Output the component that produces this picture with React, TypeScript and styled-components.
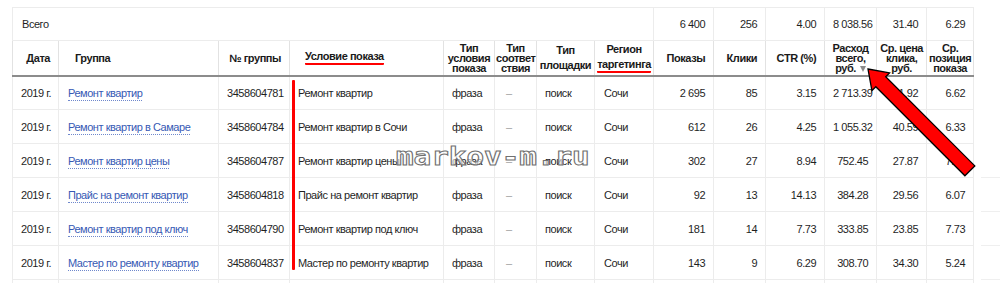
import React from "react";
import styled, { createGlobalStyle } from "styled-components";

const GlobalStyle = createGlobalStyle`
  html, body {
    margin: 0;
    padding: 0;
    background: #fff;
  }
  body {
    font-family: "Liberation Sans", Arial, sans-serif;
    color: #1f1f1f;
  }
`;

const Page = styled.div`
  position: relative;
  width: 1000px;
  height: 283px;
  overflow: hidden;
  display: flex;
  align-items: flex-start;
  padding: 7px 0 0 12px;
  box-sizing: border-box;
`;

const Table = styled.table`
  width: 961px;
  table-layout: fixed;
  border-collapse: collapse;
  border: 1px solid #e4e4e4;
  font-size: 11px;
  letter-spacing: -0.45px;
  flex-shrink: 0;
`;

const TotalRow = styled.tr`
  height: 33px;
`;

const HeadRow = styled.tr`
  height: 35px;
  border-bottom: 2px solid #8c8c8c;
`;

const DataRow = styled.tr`
  height: 34px;
`;

const Cell = styled.td<{ $align?: "left" | "right" | "center"; $pad?: string }>`
  border: 1px solid #ececec;
  padding: ${(p) => p.$pad || "0 8px"};
  text-align: ${(p) => p.$align || "left"};
  vertical-align: middle;
  white-space: nowrap;
  overflow: hidden;
  line-height: 14px;
`;

const HeadCell = styled.th<{ $align?: "left" | "right" | "center"; $pad?: string; $lh?: number }>`
  border: 1px solid #e2e2e2;
  border-bottom: 2px solid #8c8c8c;
  padding: ${(p) => p.$pad || "0 8px"};
  text-align: ${(p) => p.$align || "center"};
  vertical-align: middle;
  font-weight: 700;
  font-size: 11px;
  line-height: ${(p) => p.$lh || 10}px;
  color: #1a1a1a;
  white-space: nowrap;
`;

const Line = styled.span`
  display: block;
`;

const Marked = styled.span`
  display: inline-block;
  padding-bottom: 1px;
  border-bottom: 2.5px solid #f00;
  border-radius: 1px;
  line-height: 12px;
`;

const SortMark = styled.span`
  display: inline-block;
  margin-left: 4px;
  vertical-align: middle;
  width: 0;
  height: 0;
  border-left: 3.5px solid transparent;
  border-right: 3.5px solid transparent;
  border-top: 6px solid #8a8a8a;
`;

const GroupLink = styled.span`
  color: #3659b4;
  border-bottom: 1px dotted #6f88cc;
  padding-bottom: 1px;
`;

const Dash = styled.span`
  color: #a0a0a0;
`;

const SideStrip = styled.div`
  margin-left: 7px;
  width: 20px;
  padding-top: 170px;
  display: flex;
  flex-direction: column;
`;

const SideLine = styled.div`
  height: 33px;
  border-top: 1px solid #efefef;
`;

const Marker = styled.div`
  position: absolute;
  left: 292px;
  top: 80px;
  width: 2.5px;
  height: 190px;
  background: #f00;
  border-radius: 1px;
`;

const Watermark = styled.div`
  position: absolute;
  left: 396px;
  top: 144px;
  font-family: "DejaVu Sans Mono", "Liberation Mono", monospace;
  font-weight: 700;
  font-size: 25px;
  line-height: 25px;
  color: rgba(255, 255, 255, 0.6);
  -webkit-text-stroke: 1px #707070;
  transform: scaleX(1.17);
  transform-origin: left top;
  pointer-events: none;
`;

const Overlay = styled.svg`
  position: absolute;
  left: 0;
  top: 0;
  pointer-events: none;
`;

const cols = [46, 160, 71, 154, 51, 42, 58, 59, 60, 52, 59, 52, 50, 47];

const rows = [
  ["Ремонт квартир", "3458604781", "Ремонт квартир", "2 695", "85", "3.15", "2 713.39", "31.92", "6.62"],
  ["Ремонт квартир в Самаре", "3458604784", "Ремонт квартир в Сочи", "612", "26", "4.25", "1 055.32", "40.59", "6.33"],
  ["Ремонт квартир цены", "3458604787", "Ремонт квартир цены", "302", "27", "8.94", "752.45", "27.87", "7.01"],
  ["Прайс на ремонт квартир", "3458604818", "Прайс на ремонт квартир", "92", "13", "14.13", "384.28", "29.56", "6.07"],
  ["Ремонт квартир под ключ", "3458604790", "Ремонт квартир под ключ", "181", "14", "7.73", "333.85", "23.85", "7.73"],
  ["Мастер по ремонту квартир", "3458604837", "Мастер по ремонту квартир", "143", "9", "6.29", "308.70", "34.30", "5.24"],
];

const totals = ["6 400", "256", "4.00", "8 038.56", "31.40", "6.29"];

const Stack: React.FC<{ lines: string[] }> = ({ lines }) => (
  <>
    {lines.map((l, i) => (
      <Line key={i}>{l}</Line>
    ))}
  </>
);

const App: React.FC = () => {
  return (
    <>
      <GlobalStyle />
      <Page>
        <Table>
          <colgroup>
            {cols.map((w, i) => (
              <col key={i} style={{ width: w }} />
            ))}
          </colgroup>
          <tbody>
            <TotalRow>
              <Cell colSpan={8} $pad="0 9px">
                Всего
              </Cell>
              {totals.map((t, i) => (
                <Cell key={i} $align="right">
                  {t}
                </Cell>
              ))}
            </TotalRow>
            <HeadRow>
              <HeadCell $align="right">Дата</HeadCell>
              <HeadCell $align="left" $pad="0 8px 0 16px">
                Группа
              </HeadCell>
              <HeadCell $align="right">№ группы</HeadCell>
              <HeadCell $align="left" $pad="0 8px 0 15px">
                <Marked>Условие показа</Marked>
              </HeadCell>
              <HeadCell $pad="0 1px">
                <Stack lines={["Тип", "условия", "показа"]} />
              </HeadCell>
              <HeadCell $pad="0 1px">
                <Stack lines={["Тип", "соответ", "ствия"]} />
              </HeadCell>
              <HeadCell $pad="0 1px" $lh={15}>
                <Stack lines={["Тип", "площадки"]} />
              </HeadCell>
              <HeadCell $pad="0 1px" $lh={15}>
                <Line>Регион</Line>
                <Marked>таргетинга</Marked>
              </HeadCell>
              <HeadCell $align="right">Показы</HeadCell>
              <HeadCell $align="right">Клики</HeadCell>
              <HeadCell $align="right">CTR (%)</HeadCell>
              <HeadCell $pad="0 1px">
                <Line>Расход</Line>
                <Line>всего,</Line>
                <Line>
                  руб.
                  <SortMark />
                </Line>
              </HeadCell>
              <HeadCell $pad="0 1px">
                <Stack lines={["Ср. цена", "клика,", "руб."]} />
              </HeadCell>
              <HeadCell $pad="0 1px">
                <Stack lines={["Ср.", "позиция", "показа"]} />
              </HeadCell>
            </HeadRow>
            {rows.map((r, i) => (
              <DataRow key={i}>
                <Cell $align="right">2019 г.</Cell>
                <Cell $pad="0 8px 0 9px">
                  <GroupLink>{r[0]}</GroupLink>
                </Cell>
                <Cell $align="right">{r[1]}</Cell>
                <Cell $pad="0 8px 0 8px">{r[2]}</Cell>
                <Cell>фраза</Cell>
                <Cell $pad="0 8px 0 11px">
                  <Dash>–</Dash>
                </Cell>
                <Cell>поиск</Cell>
                <Cell $pad="0 8px 0 9px">Сочи</Cell>
                {r.slice(3).map((v, j) => (
                  <Cell key={j} $align="right">
                    {v}
                  </Cell>
                ))}
              </DataRow>
            ))}
            <DataRow>
              {cols.map((_, i) => (
                <Cell key={i} />
              ))}
            </DataRow>
          </tbody>
        </Table>
        <SideStrip>
          <SideLine />
          <SideLine />
          <SideLine />
          <SideLine />
        </SideStrip>
        <Marker />
        <Watermark>markov-m.ru</Watermark>
        <Overlay width="1000" height="283" viewBox="0 0 1000 283">
          <polygon
            points="868,69 889.6,72.9 885.7,76.8 974.8,165.9 964.9,175.8 875.8,86.7 871.9,90.6"
            fill="#ff0000"
            stroke="#000"
            strokeWidth="1.3"
            strokeLinejoin="miter"
          />
        </Overlay>
      </Page>
    </>
  );
};

export default App;
